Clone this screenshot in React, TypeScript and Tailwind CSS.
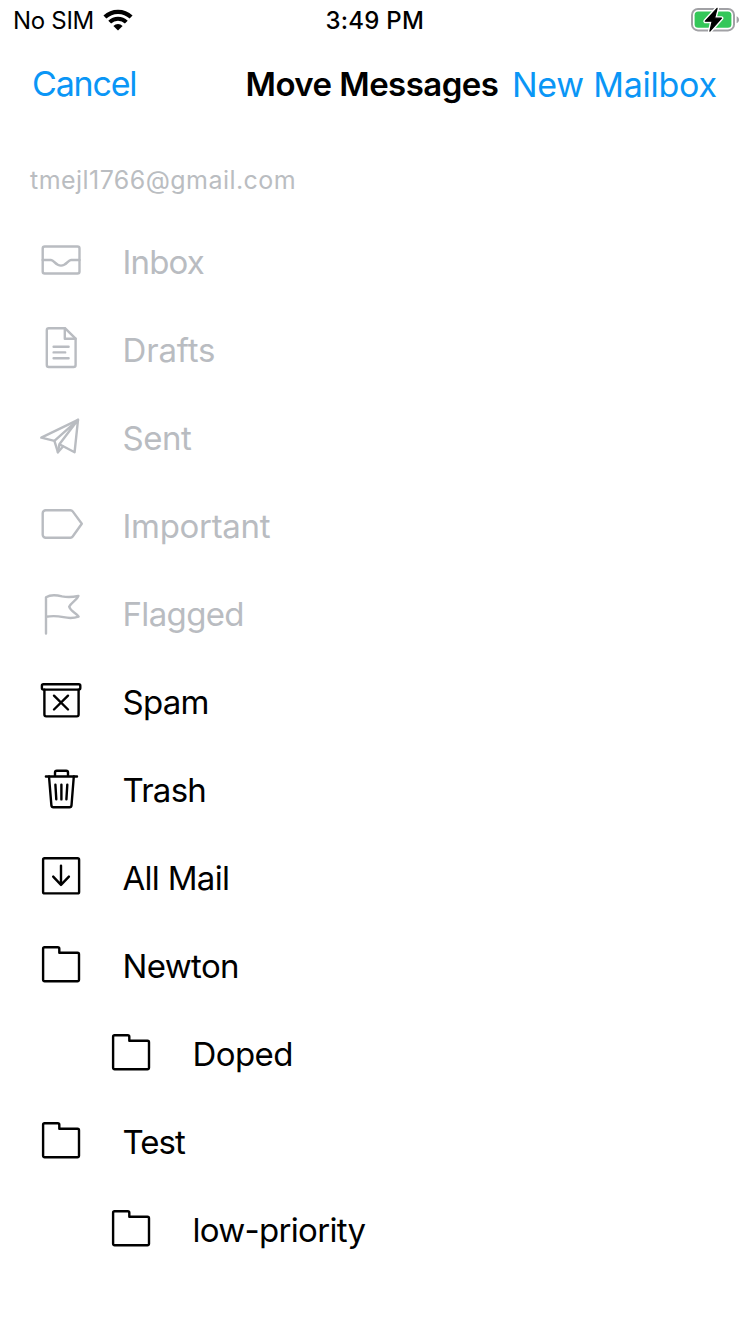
import React from "react";

type IconName = "inbox" | "drafts" | "sent" | "important" | "flagged" | "spam" | "trash" | "all" | "folder";

const shapes: Record<IconName, React.ReactNode> = {
  inbox: (
    <>
      <rect x="12.7" y="14.5" width="36.8" height="27" rx="2" />
      <path d="M12.7 28H21C24.2 28 25.2 33.6 31 33.6C36.8 33.6 37.8 28 41 28H49.5" />
    </>
  ),
  drafts: (
    <>
      <path d="M35.2 8.3H18.8a2 2 0 0 0-2 2V45a2 2 0 0 0 2 2H43.6a2 2 0 0 0 2-2V18.7Z" />
      <path d="M34.8 8.3V18.7H45.6M23.6 26.8H38.6M23.6 32.4H35.2M23.6 38.3H38.6" />
    </>
  ),
  sent: (
    <>
      <path d="M48 11.8L11.3 29.7L24.4 32.8L27.9 44.2L33 38.5" />
      <path d="M48 11.8L29.4 36.2L44.6 44.2ZM24.4 32.8L48 11.8M29.4 36.2L27.9 44.2" />
    </>
  ),
  important: <path d="M15.7 14.2H40.4a3 3 0 0 1 2.3 1.2L51.8 27.8L42.7 40.5a3 3 0 0 1-2.3 1.2H15.7a3 3 0 0 1-3-3V17.2a3 3 0 0 1 3-3Z" />,
  flagged: (
    <path d="M16 49.5V13.2C20.5 10.5 27 11.1 32 12.4C38 13.6 43 13.2 48.4 11.9C47 16 41 18.5 39.2 22.8C40.5 27.5 46 28.5 48.6 32.6C44 34.3 38.5 34.3 33.5 33.2C27.5 31.9 21.5 31.7 16 32.8" />
  ),
  spam: (
    <>
      <rect x="11.9" y="12.3" width="38.4" height="5.3" rx="1.5" />
      <path d="M14.4 17.6V42.6a1.8 1.8 0 0 0 1.8 1.8H46.8a1.8 1.8 0 0 0 1.8-1.8V17.6M24 23.7L38 37.5M38 23.7L24 37.5" />
    </>
  ),
  trash: (
    <>
      <path d="M15.9 16.5H47M25 16.5V12.6a1.8 1.8 0 0 1 1.8-1.8H36.2a1.8 1.8 0 0 1 1.8 1.8V16.5" />
      <path d="M19 16.5L21.4 45.4a2 2 0 0 0 2 1.8H39.5a2 2 0 0 0 2-1.8L43.8 16.5M25.4 24.6L26.3 39.4M31.4 24.6V39.4M37.3 24.6L36.4 39.4" />
    </>
  ),
  all: (
    <>
      <rect x="13.1" y="10.2" width="36" height="35.2" rx="1.5" />
      <path d="M31 17.6V36.6M23.2 28.6L31 36.9L38.9 28.6" />
    </>
  ),
  folder: <path d="M14.6 11.3H27.8a1.5 1.5 0 0 1 1.5 1.5V16.8H47.5a1.5 1.5 0 0 1 1.5 1.5V43.8a1.5 1.5 0 0 1-1.5 1.5H14.6a1.5 1.5 0 0 1-1.5-1.5V12.8a1.5 1.5 0 0 1 1.5-1.5Z" />,
};

const folders: { name: string; icon: IconName; tracking: string; disabled?: boolean; nested?: boolean }[] = [
  { name: "Inbox", icon: "inbox", tracking: "tracking-[-0.85px]", disabled: true },
  { name: "Drafts", icon: "drafts", tracking: "tracking-[-0.15px]", disabled: true },
  { name: "Sent", icon: "sent", tracking: "tracking-[-0.5px]", disabled: true },
  { name: "Important", icon: "important", tracking: "tracking-[-0.3px]", disabled: true },
  { name: "Flagged", icon: "flagged", tracking: "tracking-[-0.65px]", disabled: true },
  { name: "Spam", icon: "spam", tracking: "tracking-[-0.75px]" },
  { name: "Trash", icon: "trash", tracking: "tracking-[-0.75px]" },
  { name: "All Mail", icon: "all", tracking: "tracking-[-0.7px]" },
  { name: "Newton", icon: "folder", tracking: "tracking-[-0.65px]" },
  { name: "Doped", icon: "folder", tracking: "tracking-[-0.6px]", nested: true },
  { name: "Test", icon: "folder", tracking: "tracking-[-0.95px]" },
  { name: "low-priority", icon: "folder", tracking: "tracking-[-0.7px]", nested: true },
];

function FolderIcon({ name }: { name: IconName }) {
  return (
    <svg width="60" height="60" viewBox="0 0 60 60" fill="none" stroke="currentColor" strokeWidth="2.4" strokeLinecap="round" strokeLinejoin="round" className="shrink-0">
      {shapes[name]}
    </svg>
  );
}

function StatusBar() {
  return (
    <div className="grid h-10 grid-cols-3 items-center pl-[13px] pr-[11px] text-2xl leading-[39px]">
      <div className="flex items-center">
        <span className="pt-px tracking-[-0.3px]">No SIM</span>
        <svg width="30" height="22" viewBox="0 0 30 22" className="ml-[9.5px]" fill="none" stroke="#000" strokeWidth="4.2">
          <path d="M1.9 8.1A18.9 18.9 0 0 1 28.1 8.1" />
          <path d="M6.7 13.1A11.8 11.8 0 0 1 23.3 13.1" strokeWidth="4" />
          <path d="M15 21.6L10.4 17A6.4 6.4 0 0 1 19.6 17Z" fill="#000" stroke="none" />
        </svg>
      </div>
      <span className="pt-px pr-[2.5px] text-center font-medium tracking-[0.25px]">3:49 PM</span>
      <svg width="49" height="28" viewBox="0 0 49 28" className="justify-self-end">
        <rect x="2" y="3" width="42" height="21.4" rx="6" fill="none" stroke="#a1a1a5" strokeWidth="2" />
        <path d="M46.6 10.2C48.6 11 49 12.6 49 13.8S48.6 16.4 46.6 17.2Z" fill="#a1a1a5" />
        <rect x="4.6" y="5.6" width="36.8" height="16.2" rx="3.6" fill="#34c759" />
        <path d="M27.1 2.4L15.3 15.2H22.2L19.9 25.2L31.5 12.2H24.6Z" fill="#000" stroke="#fff" strokeWidth="4" strokeLinejoin="round" />
        <path d="M27.1 2.4L15.3 15.2H22.2L19.9 25.2L31.5 12.2H24.6Z" fill="#000" stroke="#000" strokeWidth="1.2" strokeLinejoin="round" />
      </svg>
    </div>
  );
}

export default function App() {
  return (
    <div className="min-h-[1334px] w-[750px] overflow-hidden bg-white font-['Inter',sans-serif] whitespace-nowrap text-black">
      <StatusBar />
      <header className="flex h-[88px] items-center pl-[32px] text-[34px] leading-[88px] text-[#0a96f6]">
        <button className="w-[213.5px] text-left tracking-[-1.2px]">Cancel</button>
        <h1 className="w-[266.5px] text-[33px] font-semibold tracking-[-0.55px] text-black">Move Messages</h1>
        <button className="pt-[2px] tracking-[-0.25px]">New Mailbox</button>
      </header>
      <main>
        <h2 className="h-[90px] pt-[32px] pl-[30px] text-[25px] leading-10 tracking-[0.45px] text-[#babdc1]">tmejl1766@gmail.com</h2>
        <ul>
          {folders.map((folder) => (
            <li
              key={folder.name}
              className={`flex h-[88px] items-center gap-[32.5px] text-[33px] ${folder.nested ? "pl-[100px]" : "pl-[30px]"} ${folder.disabled ? "text-[#b9bcc1]" : "text-black"}`}
            >
              <FolderIcon name={folder.icon} />
              <span className={`pt-[2px] ${folder.tracking}`}>{folder.name}</span>
            </li>
          ))}
        </ul>
      </main>
    </div>
  );
}
